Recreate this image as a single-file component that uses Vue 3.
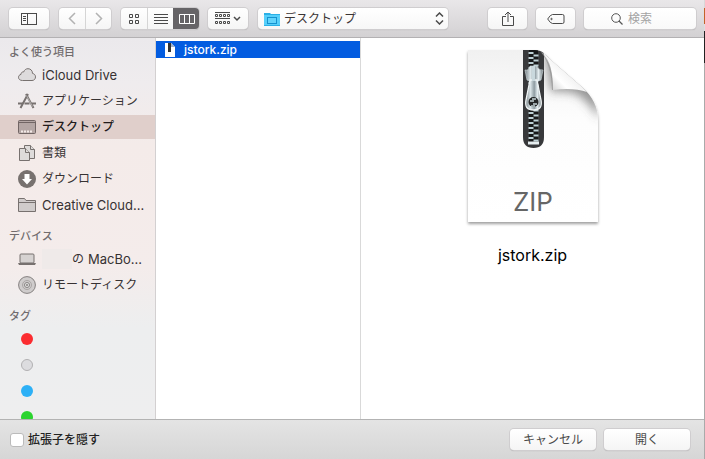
<script setup>
import { ref } from 'vue'

const favorites = [
  { id: 'cloud', label: 'iCloud Drive' },
  { id: 'apps', label: 'アプリケーション', kana: true },
  { id: 'desktop', label: 'デスクトップ', kana: true },
  { id: 'docs', label: '書類', kana: true },
  { id: 'downloads', label: 'ダウンロード', kana: true },
  { id: 'folder', label: 'Creative Cloud...' },
]
const tags = ['red', 'gray', 'blue', 'green']
const active = ref('desktop')
const view = ref('columns')
const hideExt = ref(false)
const query = ref('')
const place = ref('desktop')
</script>

<template>
  <div class="dialog">
    <header class="toolbar">
      <button class="btn w40" aria-label="サイドバー">
        <svg width="16" height="12" viewBox="0 0 16 12" fill="none" stroke="#4a4a4a">
          <rect x=".5" y=".5" width="15" height="11" /><path d="M6.500 0v12M2 3.500h3M2 5.500h3M2 7.500h3" />
        </svg>
      </button>
      <div class="group">
        <button class="btn w26" aria-label="戻る" disabled>
          <svg width="8" height="13" viewBox="0 0 8 13" fill="none" stroke="#b2b2b2" stroke-width="1.500"><path d="M7 1 1.500 6.500 7 12" /></svg>
        </button>
        <button class="btn w26" aria-label="進む" disabled>
          <svg width="8" height="13" viewBox="0 0 8 13" fill="none" stroke="#b2b2b2" stroke-width="1.500"><path d="m1 1 5.500 5.500L1 12" /></svg>
        </button>
      </div>
      <div class="group">
        <button class="btn w26" :class="{ on: view === 'icons' }" aria-label="アイコン" @click="view = 'icons'">
          <svg width="10" height="10" viewBox="0 0 10 10" fill="none" stroke="currentColor"><path d="M.5.5h3v3h-3zM6.500.5h3v3h-3zM.5 6.500h3v3h-3zM6.500 6.500h3v3h-3z" /></svg>
        </button>
        <button class="btn w26" :class="{ on: view === 'list' }" aria-label="リスト" @click="view = 'list'">
          <svg width="14" height="10" viewBox="0 0 14 10" stroke="currentColor"><path d="M0 .5h14M0 3.500h14M0 6.500h14M0 9.500h14" /></svg>
        </button>
        <button class="btn w26" :class="{ on: view === 'columns' }" aria-label="カラム" @click="view = 'columns'">
          <svg width="16" height="10" viewBox="0 0 16 10" fill="none" stroke="currentColor"><path d="M.5.5h15v9H.5zM5.500 0v10M10.500 0v10" /></svg>
        </button>
      </div>
      <button class="btn w40 arrange" aria-label="グループ">
        <svg width="26" height="13" viewBox="0 0 26 13" fill="none" stroke="#4a4a4a">
          <path d="M0 .5h15M0 6.500h15M.5 2.500h2v2h-2zM4.500 2.500h2v2h-2zM8.500 2.500h2v2h-2zM12.500 2.500h2v2h-2zM.5 9.500h2v2h-2zM4.500 9.500h2v2h-2zM8.500 9.500h2v2h-2zM12.500 9.500h2v2h-2z" />
          <path d="m19 5 3 3 3-3" stroke-width="1.500" />
        </svg>
      </button>
      <div class="popup">
        <svg class="lead" width="16" height="14" viewBox="0 0 16 14"><path d="M0 1h6l1 1h9v12H0z" fill="#2bb0e6" /><path d="M0 3h16v10H0z" fill="#55cffa" /><rect x="3.500" y="5.500" width="9" height="6" fill="#62d3fb" stroke="#1592cf" /></svg>
        <select v-model="place" aria-label="場所"><option value="desktop">デスクトップ</option></select>
        <svg class="tail" width="9" height="13" viewBox="0 0 9 13" fill="none" stroke="#4a4a4a" stroke-width="1.500"><path d="m1 4.500 3.500-3.500L8 4.500M1 8.500 4.500 12 8 8.500" /></svg>
      </div>
      <div class="right">
        <button class="btn w39" aria-label="共有">
          <svg width="12" height="16" viewBox="0 0 12 16" fill="none" stroke="#4a4a4a"><path d="M4 5.500H.5v9h11v-9H8M6 11V1M3 4l3-3 3 3" /></svg>
        </button>
        <button class="btn w39" aria-label="タグを編集">
          <svg width="18" height="10" viewBox="0 0 18 10" fill="none" stroke="#4a4a4a"><path d="M5.500.5h10q1.500 0 1.500 1.500v6q0 1.500-1.500 1.500h-10Q3.500 9.500.7 5 3.500.5 5.500.5z" /><circle cx="4.500" cy="5" r=".7" /></svg>
        </button>
        <label class="search">
          <svg width="12" height="12" viewBox="0 0 12 12" fill="none" stroke="#555"><circle cx="5" cy="5" r="4.300" /><path d="m8 8 3.500 3.500" stroke-width="1.300" /></svg>
          <input v-model="query" type="search" placeholder="検索" aria-label="検索" />
        </label>
      </div>
    </header>

    <main class="body">
      <nav class="sidebar">
        <section>
          <h2>よく使う項目</h2>
          <a v-for="f in favorites" :key="f.id" href="#" class="row" :class="{ active: active === f.id, kana: f.kana }" @click.prevent="active = f.id">
            <svg width="18" height="18" viewBox="0 0 18 18" fill="none" stroke="#77716f">
              <path v-if="f.id === 'cloud'" d="M4.500 14.500C1.800 14.500.5 13 .5 11.300c0-1.500 1-2.600 2.500-2.900C3 6.600 4.200 5.700 5.600 6 6.500 3.800 8 2.700 10 2.700c2.700 0 4.500 2 4.500 4.700 1.900.4 3 1.700 3 3.500 0 2-1.300 3.600-3.500 3.600z" fill="#dddbdc" />
              <g v-else-if="f.id === 'apps'"><path d="m8 2 7.500 14M10 2 2.500 16" stroke-width="2" /><path d="M0 11.500h5M6.500 11.500h5M13.500 11.500H18" stroke-width="2" /><path d="m8.500 3.500 6 11" stroke="#eee" stroke-width=".5" /></g>
              <g v-else-if="f.id === 'desktop'" stroke="#716564"><rect x=".5" y="2.500" width="17" height="13" rx="1" fill="#b4a6a4" /><path d="M1 4.500h16" /><path d="M3 13.500h12" stroke="#f3eae8" stroke-width="2" stroke-dasharray="2 1" /></g>
              <g v-else-if="f.id === 'docs'" fill="#dedbda"><path d="M6.500 1.500h6l4 4v9h-10z" /><path d="M12.500 1.500v4h4" /><path d="M1.500 4.500h6l4 4v8h-10z" /><path d="M7.500 4.500v4h4" /></g>
              <g v-else-if="f.id === 'downloads'" stroke="none"><circle cx="9" cy="9" r="9" fill="#77716f" /><path d="M6.500 4h5v5H14l-5 5.500L4 9h2.500z" fill="#fff" /></g>
              <g v-else><path d="M.5 15.500v-13h6l1.500 2h9.500v11z" fill="#d0cccb" /><path d="M1 6.500h16" /></g>
            </svg>
            <span>{{ f.label }}</span>
          </a>
        </section>
        <section>
          <h2>デバイス</h2>
          <a href="#" class="row" @click.prevent>
            <svg width="18" height="18" viewBox="0 0 18 18"><rect x="2" y="4" width="14" height="9" rx="1" fill="#d6d2d1" stroke="#77716f" /><path d="M0 13h18l-1 2H1z" fill="#77716f" /></svg>
            <span class="owner"><i class="mask"></i><span class="kana">の</span>MacBo...</span>
          </a>
          <a href="#" class="row kana" @click.prevent>
            <svg width="18" height="18" viewBox="0 0 18 18" fill="none" stroke="#858180"><circle cx="9" cy="9" r="8.400" fill="#cfcccc" /><circle cx="9" cy="9" r="4.500" stroke="#aaa6a5" /><circle cx="9" cy="9" r="2.500" fill="#eee" /><circle cx="9" cy="9" r=".8" /></svg>
            <span>リモートディスク</span>
          </a>
        </section>
        <section>
          <h2>タグ</h2>
          <a v-for="t in tags" :key="t" href="#" class="row" :aria-label="t" @click.prevent><span class="dot" :class="t"></span></a>
        </section>
      </nav>

      <div class="files">
        <button class="file">
          <svg width="12" height="14" viewBox="0 0 12 14"><path d="M1 0h6l4 4v10H1z" fill="#fff" /><path d="M4 0h3v9H4z" fill="#333" /><path d="M7 0v4h4z" fill="#9fb2cc" /></svg>
          <span>jstork.zip</span>
        </button>
      </div>

      <figure class="preview">
        <svg width="140" height="182" viewBox="0 0 140 182">
          <defs>
            <linearGradient id="paper" x1="0" y1="0" x2="0" y2="1"><stop offset="0" stop-color="#f1f1f1" /><stop offset=".4" stop-color="#fdfdfd" /><stop offset="1" stop-color="#fff" /></linearGradient>
            <linearGradient id="curl" gradientUnits="userSpaceOnUse" x1="88" y1="44" x2="106" y2="26"><stop offset="0" stop-color="#d2d2d2" /><stop offset=".5" stop-color="#fff" /><stop offset="1" stop-color="#f1f1f1" /></linearGradient>
            <linearGradient id="metal"><stop offset="0" stop-color="#788287" /><stop offset=".3" stop-color="#dce6e9" /><stop offset=".55" stop-color="#8f9ca2" /><stop offset=".75" stop-color="#e4edf0" /><stop offset="1" stop-color="#707a7f" /></linearGradient>
            <filter id="drop" x="-10%" y="-10%" width="120%" height="120%"><feDropShadow dx="0" dy="2" stdDeviation="1.500" flood-opacity=".38" /></filter>
            <filter id="soft" x="-40%" y="-40%" width="180%" height="180%"><feGaussianBlur stdDeviation="5" /></filter>
            <clipPath id="sheet"><path d="M5 4h66c8 0 13 5 17 10l31 27c11 10 16 20 16 33v102H5z" /></clipPath>
          </defs>
          <path d="M5 4h66c8 0 13 5 17 10l31 27c11 10 16 20 16 33v102H5z" fill="url(#paper)" filter="url(#drop)" />
          <g clip-path="url(#sheet)">
            <path d="M82 8 88 46q20-2 30 5 10 8 18 22V40L90 6z" fill="#555" fill-opacity=".6" filter="url(#soft)" />
            <path d="M60 4h21v87q0 11-10.500 11T60 91z" fill="#38393b" />
            <path d="M66 4h9v92h-9z" fill="#171819" />
            <g stroke="#bdd0d5" stroke-width="2" stroke-dasharray="2 3">
              <path d="M68 6v90" stroke-width="5" />
              <path d="M73 8.500v87" stroke-width="5" />
            </g>
            <path d="M65 97h11" stroke="#e6eef0" stroke-width="3" />
            <path d="M62 24q4 1 5-4h7q2 5 6 4l-2 10q-8 4-14 0z" fill="url(#metal)" stroke="#d2dde1" stroke-width=".6" />
            <path d="M67 34h7l4 20q2 10-7.500 10T63 54z" fill="url(#metal)" stroke="#eff4f5" stroke-width="1.300" />
            <path d="M69 20h3v15h-3z" fill="#c9d8dd" />
            <circle cx="70.500" cy="56" r="5" fill="#242627" /><path d="M67 55h4M70 58h4M68 60h4M69 53h4" stroke="#c2d1d5" stroke-width="1.300" />
          </g>
          <path d="M78 6c4 2 7 5 10 8l31 27 5 5C115 43 104 42 90 44 90 28 88 14 78 6z" fill="url(#curl)" />
          <path d="M79 7c7 9 10 20 10.500 37" fill="none" stroke="#888" stroke-opacity=".6" />
          <text x="70" y="165" text-anchor="middle" class="kind">ZIP</text>
        </svg>
        <figcaption>jstork.zip</figcaption>
      </figure>
    </main>

    <footer class="footer">
      <label class="check"><input v-model="hideExt" type="checkbox" /><span>拡張子を隠す</span></label>
      <div class="actions">
        <button class="btn action">キャンセル</button>
        <button class="btn action">開く</button>
      </div>
    </footer>
    <div class="edge"></div>
  </div>
</template>

<style>
body { margin: 0; background: #fff; }
</style>

<style scoped>
* { box-sizing: border-box; }
.dialog {
  position: relative;
  height: 100vh;
  display: flex;
  flex-direction: column;
  overflow: hidden;
  padding-right: 1px;
  font-family: Inter, "Noto Sans CJK JP", sans-serif;
  font-size: 13px;
  line-height: 20px;
  color: #3a3535;
}
button, select, input { font: inherit; color: inherit; margin: 0; }
svg { flex: none; display: block; }
.edge {
  position: absolute;
  inset: 0 0 0 auto;
  width: 1px;
  background: linear-gradient(#d8d8d8 8px, #c4622a 8px, #c4622a 24px, #ddd 24px, #ddd 31px, #222 31px, #222 63px, #aaa 63px);
}
.toolbar {
  flex: none;
  height: 38px;
  display: flex;
  align-items: center;
  padding: 0 8px 0 9px;
  border-bottom: 1px solid #b3b1b3;
  background: linear-gradient(#e9e7e9, #d3d1d3);
}
.btn {
  height: 21px;
  padding: 0;
  border: 0;
  border-radius: 4px;
  display: flex;
  align-items: center;
  justify-content: center;
  background: linear-gradient(#fff, #f5f5f5);
  box-shadow: 0 0 0 1px #cfcdcf, 0 1px 1px #a5a3a5;
  color: #4a4a4a;
}
.w40 { width: 40px; }
.w39 { width: 39px; }
.w26 { width: 26px; }
.group { display: flex; margin-left: 10px; border-radius: 4px; box-shadow: 0 0 0 1px #cfcdcf, 0 1px 1px #a5a3a5; }
.group .btn { box-shadow: none; border-radius: 0; }
.group .btn + .btn { border-left: 1px solid #d5d5d5; }
.group .btn:first-child { border-radius: 4px 0 0 4px; }
.group .btn:last-child { border-radius: 0 4px 4px 0; }
.group .btn.on { background: #666467; color: #fff; border-color: #666467; }
.arrange { margin-left: 9px; }
.popup { position: relative; margin-left: 10px; flex: 0 1 190px; }
.popup select {
  display: block;
  width: 100%;
  height: 21px;
  padding: 0 24px 0 26px;
  border: 0;
  border-radius: 4px;
  appearance: none;
  background: linear-gradient(#fff, #f7f7f7);
  box-shadow: 0 0 0 1px #cfcdcf, 0 1px 1px #a5a3a5;
  font-size: 12px;
}
.lead, .tail { position: absolute; top: 4px; pointer-events: none; }
.lead { left: 6px; z-index: 1; }
.tail { right: 4px; z-index: 1; }
.right { margin-left: auto; display: flex; gap: 9px; }
.search {
  width: 112px;
  height: 21px;
  display: flex;
  align-items: center;
  gap: 5px;
  padding-left: 27px;
  border-radius: 4px;
  background: linear-gradient(#fff, #f9f9f9);
  box-shadow: 0 0 0 1px #cfcdcf, 0 1px 1px #a5a3a5;
}
.search input {
  flex: 1;
  min-width: 0;
  height: 20px;
  padding: 0;
  border: 0;
  outline: 0;
  background: none;
  appearance: none;
  font-size: 12px;
}
.search input::placeholder { color: #a3a3a3; opacity: 1; }
.body { flex: 1; min-height: 0; display: flex; background: #fff; }
.sidebar {
  flex: none;
  width: 156px;
  padding-top: 3px;
  display: flex;
  flex-direction: column;
  gap: 8px;
  overflow: hidden;
  border-right: 1px solid #d3d0d1;
  background: linear-gradient(#ebe9ec, #efecee 12%, #f4ebe9 28%, #f4eceb 60%, #edeeef 76%, #eeeeef);
}
.sidebar section { display: flex; flex-direction: column; gap: 2px; }
.sidebar h2 {
  margin: 0 0 -2px;
  padding-left: 9px;
  height: 22px;
  font-size: 11px;
  line-height: 22px;
  font-weight: 500;
  color: #716c6e;
}
.row {
  height: 24px;
  display: flex;
  align-items: center;
  gap: 6px;
  padding-left: 18px;
  color: #373233;
  text-decoration: none;
  white-space: nowrap;
}
.kana { font-size: 12px; }
.row.active { background: #e0cfcb; color: #221c1c; font-weight: 500; }
.owner { display: flex; align-items: center; }
.owner .kana { margin-right: 4px; }
.mask { width: 30px; height: 20px; background: #efeae9; }
.dot { width: 12px; height: 12px; margin-left: 3px; border-radius: 50%; }
.red { background: #fb2c30; }
.gray { background: #dcdcdf; border: 1px solid #b2b1b3; }
.blue { background: #2db0f6; }
.green { background: #2bd42f; }
.files { flex: none; width: 205px; padding-top: 3px; border-right: 1px solid #d9d9d9; }
.file {
  width: 100%;
  height: 17px;
  padding: 0 0 0 8px;
  border: 0;
  display: flex;
  align-items: center;
  gap: 8px;
  background: #035ce0;
  color: #fff;
  font-size: 12px;
  font-weight: 500;
  line-height: 17px;
}
.preview {
  flex: 1;
  margin: 0;
  padding-top: 8px;
  display: flex;
  flex-direction: column;
  align-items: center;
}
.preview figcaption { margin-top: 16px; font-size: 16px; font-weight: 400; line-height: 22px; color: #000; }
.kind { font-family: Inter, sans-serif; font-size: 26px; fill: #666; }
.footer {
  flex: none;
  height: 40px;
  padding: 0 14px 0 10px;
  display: flex;
  align-items: center;
  justify-content: space-between;
  border-top: 1px solid #b3b3b3;
  background: linear-gradient(#e4e4e4, #d6d6d6);
}
.check { display: flex; align-items: center; gap: 4px; font-size: 12px; font-weight: 500; color: #222; }
.check input {
  width: 14px;
  height: 14px;
  border: 1px solid #bbb;
  border-radius: 3px;
  appearance: none;
  background: #fff;
}
.check input:checked { background: #035ce0; }
.actions { display: flex; gap: 8px; }
.action { width: 86px; font-size: 12px; }
</style>
